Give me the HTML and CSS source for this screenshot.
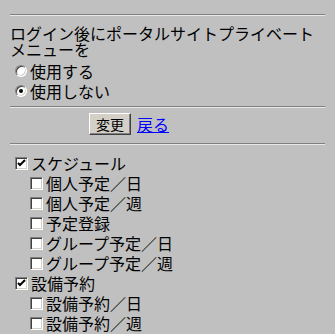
FILE: index.html
```html
<!DOCTYPE html>
<html lang="ja">
<head>
    <meta charset="UTF-8">
    <title>ポータル設定</title>
    <link rel="stylesheet" href="styles.css">
</head>
<body>
    <form class="settings">
        <hr class="rule">
        <p class="intro">ログイン後にポータルサイトプライベートメニューを</p>
        <div class="radios">
            <label class="row"><span class="radio"></span>使用する</label>
            <label class="row"><span class="radio on"></span>使用しない</label>
        </div>
        <hr class="rule">
        <div class="actions">
            <button type="button" class="button">変更</button>
            <a href="#" class="back">戻る</a>
        </div>
        <hr class="rule">
        <div class="checks">
            <label class="row"><span class="box"><svg width="9" height="9" viewBox="0 0 9 9"><path d="M1 4 L3 6 L8 1" fill="none" stroke="#000" stroke-width="2"/></svg></span>スケジュール</label>
            <label class="row sub"><span class="box"></span>個人予定／日</label>
            <label class="row sub"><span class="box"></span>個人予定／週</label>
            <label class="row sub"><span class="box"></span>予定登録</label>
            <label class="row sub"><span class="box"></span>グループ予定／日</label>
            <label class="row sub"><span class="box"></span>グループ予定／週</label>
            <label class="row"><span class="box"><svg width="9" height="9" viewBox="0 0 9 9"><path d="M1 4 L3 6 L8 1" fill="none" stroke="#000" stroke-width="2"/></svg></span>設備予約</label>
            <label class="row sub"><span class="box"></span>設備予約／日</label>
            <label class="row sub"><span class="box"></span>設備予約／週</label>
        </div>
    </form>
</body>
</html>
```

FILE: styles.css
```css
body {
    font-family: "Noto Sans CJK JP", sans-serif;
    font-size: 16px;
    background-color: #c0c0c0;
    color: #000;
    margin: 0;
    padding: 0 10px;
}
.rule {
    margin: 14px 0 0;
    height: 0;
    border: 0;
    border-top: 1px solid #808080;
    border-bottom: 1px solid #e8e8e8;
}
.intro {
    margin: 9px 0 0;
    line-height: 16px;
}
.radios {
    margin-top: 4px;
}
.radios + .rule {
    margin-top: 5px;
}
.row {
    display: flex;
    align-items: center;
    height: 20px;
    line-height: 20px;
    padding-left: 5px;
}
.radio {
    position: relative;
    box-sizing: border-box;
    width: 12px;
    height: 12px;
    margin-right: 3px;
    border-radius: 50%;
    background: #fff;
    border: 1px solid;
    border-color: #808080 #fff #fff #808080;
    box-shadow: inset 1px 1px #404040, inset -1px -1px #d4d0c8;
}
.radio.on::after {
    content: "";
    position: absolute;
    left: 3px;
    top: 3px;
    width: 4px;
    height: 4px;
    border-radius: 50%;
    background: #000;
}
.actions {
    display: flex;
    align-items: center;
    gap: 6px;
    margin-top: 5px;
    padding-left: 79px;
}
.button {
    box-sizing: border-box;
    width: 42px;
    height: 22px;
    padding: 0;
    font-family: "Noto Sans CJK JP", sans-serif;
    font-size: 14px;
    line-height: 18px;
    background: #d4d0c8;
    border: 1px solid;
    border-color: #fff #404040 #404040 #fff;
    box-shadow: inset -1px -1px #808080;
    color: #000;
}
.back {
    color: #0000ff;
    text-decoration: underline;
    line-height: 20px;
}
.actions + .rule {
    margin-top: 8px;
}
.checks {
    margin-top: 8px;
}
.box {
    display: flex;
    align-items: center;
    justify-content: center;
    box-sizing: border-box;
    width: 13px;
    height: 13px;
    margin-right: 3px;
    background: #fff;
    border: 1px solid;
    border-color: #808080 #fff #fff #808080;
    box-shadow: inset 1px 1px #404040, inset -1px -1px #d4d0c8;
}
.sub {
    padding-left: 20px;
}
```
